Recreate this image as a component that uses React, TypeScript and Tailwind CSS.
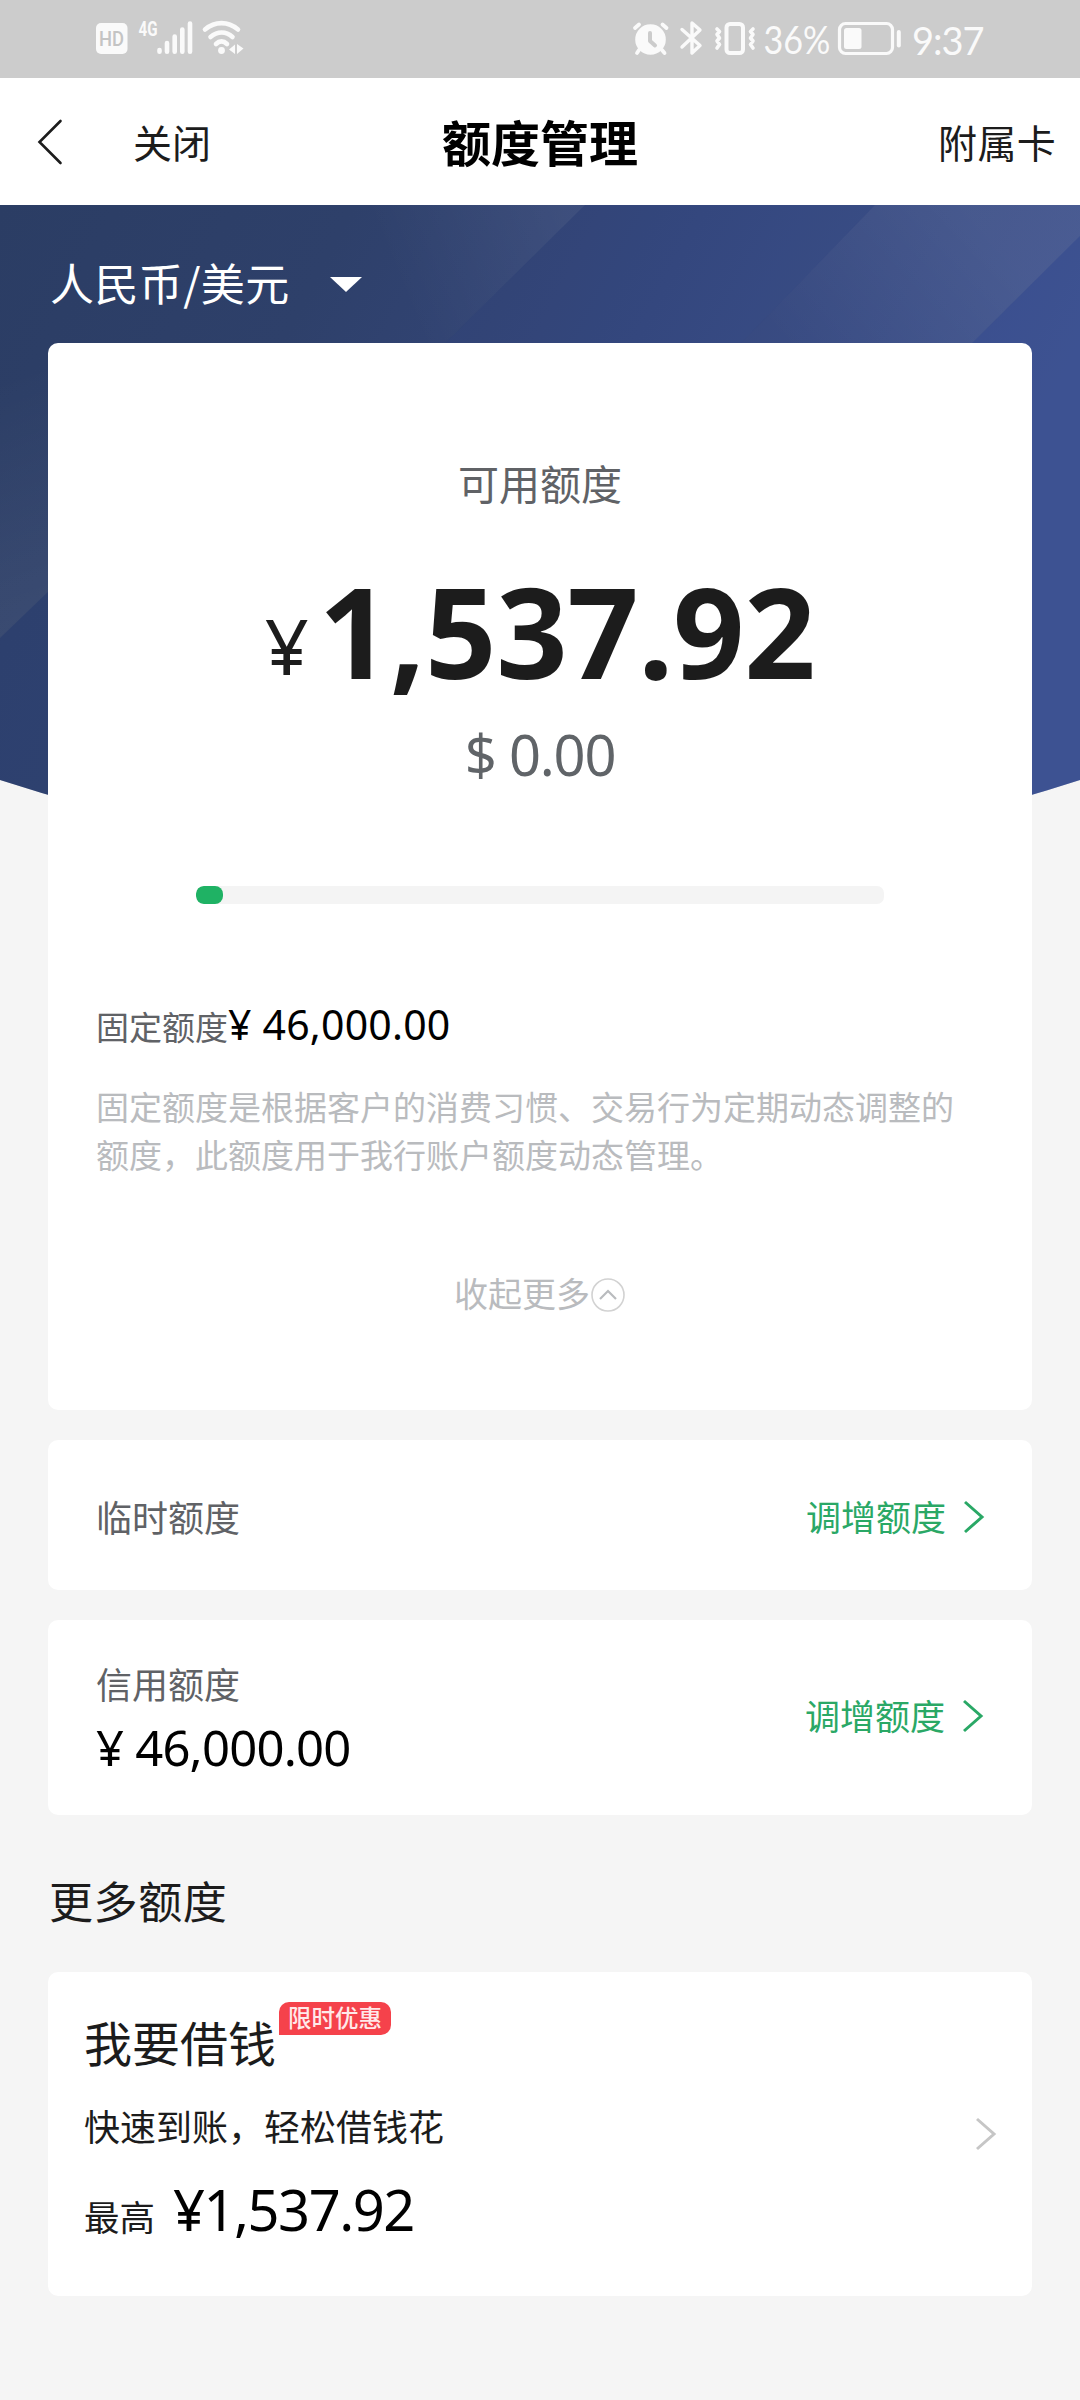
import React from "react";

const cjk = "font-['Noto_Sans_CJK_SC',sans-serif]";
const num = "font-['Noto_Sans','Noto_Sans_CJK_SC',sans-serif]";

function StatusBar() {
  return (
    <div className="flex h-[78px] w-full items-center bg-[#cccccc] text-[#fafafa]">
      <svg width="160" height="50" viewBox="90 15 160 50" className="ml-[90px]" fill="none" stroke="currentColor" strokeLinecap="round">
        <rect x="96" y="24" width="31.5" height="31" rx="5" fill="currentColor" stroke="none" />
        <text x="99" y="47" fontSize="21" fontFamily="Roboto" fontWeight="500" textLength="25" lengthAdjust="spacingAndGlyphs" fill="#c4c4c4" stroke="none">HD</text>
        <text x="138.500" y="37" fontSize="20" fontFamily="Roboto" fontWeight="700" textLength="19" lengthAdjust="spacingAndGlyphs" fill="currentColor" stroke="none">4G</text>
        <g strokeWidth="4.6">
          <path d="M159.5 51v1.7M167 44v8.7M174.7 37.500v15.200M182.300 30.500v22.200M190 24.500v28.200" />
        </g>
        <path d="M205 30.500C215 22 228 22 238 30.500" strokeWidth="4.600" />
        <path d="M210.500 38C217.500 32 226 32 232.500 38" strokeWidth="4.600" />
        <path d="M216 45C219.500 41.500 223.500 41.500 227 45" strokeWidth="4.600" />
        <circle cx="221.500" cy="51.500" r="3.400" fill="currentColor" stroke="none" />
        <path d="M229 50.500l6-5v9.500zM237 45l6.500 4.500-6.500 5.500z" fill="currentColor" stroke="none" />
      </svg>
      <svg width="278" height="50" viewBox="625 15 278 50" className="ml-[375px]" fill="none" stroke="currentColor" strokeLinecap="round" strokeLinejoin="round">
        <circle cx="650.500" cy="40.500" r="15.300" fill="currentColor" stroke="none" />
        <path d="M635 29l4-3.500M666.500 29l-4-3.500M639 51l-2 3M662 51l2.500 3" strokeWidth="3.800" />
        <path d="M650 34v8l5 4.500" stroke="#cccccc" strokeWidth="4" />
        <path d="M682 30.500l18 16-8 7.500V24l8 7-18 17" strokeWidth="3.400" />
        <rect x="726.500" y="25" width="16.500" height="29" rx="3.500" strokeWidth="4" />
        <path d="M717 30l2.500 2.500-2.500 3 2.500 3.500-2.500 3 2.500 3.500-2.500 3.500M753 30l-2.500 2.500 2.500 3-2.500 3.500 2.500 3-2.500 3.500 2.500 3.500" strokeWidth="3.600" />
        <text x="763.500" y="54.500" fontSize="38" fontFamily="Lato" textLength="67" lengthAdjust="spacingAndGlyphs" fill="currentColor" stroke="none">36%</text>
        <rect x="839.500" y="24.500" width="53" height="30" rx="6" strokeWidth="3.200" />
        <rect x="844" y="29" width="17.500" height="21" rx="2.500" fill="currentColor" stroke="none" />
        <path d="M898.800 33v13.500" strokeWidth="4" />
      </svg>
      <span className="ml-[9px] mt-px font-[Lato] text-[38px] leading-[50px] tracking-[-1px]">9:37</span>
    </div>
  );
}

function NavBar() {
  return (
    <div className={`${cjk} grid h-[127px] grid-cols-3 items-center bg-white text-[39px] leading-[48px] text-[#1c1c1c]`}>
      <div className="flex items-center">
        <svg width="28" height="48" viewBox="0 0 28 48" className="ml-9" fill="none" stroke="currentColor" strokeWidth="2.600" strokeLinecap="round">
          <path d="M24.500 3L3.500 24l21 21" />
        </svg>
        <span className="-mt-0.5 ml-[69px]">关闭</span>
      </div>
      <div className="-mt-0.5 text-center text-[49px] font-bold text-black">额度管理</div>
      <div className="-mt-0.5 pr-[24px] text-right tracking-[0.3px]">附属卡</div>
    </div>
  );
}

function BlueBackdrop() {
  return (
    <svg width="1080" height="620" viewBox="0 0 1080 620" className="absolute left-0 top-0">
      <defs>
        <linearGradient id="base" x1="0" y1="0" x2="1" y2="0.3">
          <stop offset="0" stopColor="#2b3d64" />
          <stop offset="0.3" stopColor="#2e406a" />
          <stop offset="0.6" stopColor="#35477c" />
          <stop offset="1" stopColor="#40548f" />
        </linearGradient>
        <linearGradient id="rayLeft" gradientUnits="userSpaceOnUse" x1="-90" y1="100" x2="24" y2="410">
          <stop offset="0.3" stopColor="#fff" stopOpacity="0" />
          <stop offset="1" stopColor="#fff" stopOpacity="0.06" />
        </linearGradient>
        <linearGradient id="rayMid" gradientUnits="userSpaceOnUse" x1="400" y1="90" x2="570" y2="20">
          <stop offset="0" stopColor="#fff" stopOpacity="0" />
          <stop offset="1" stopColor="#fff" stopOpacity="0.055" />
        </linearGradient>
        <linearGradient id="rayRight" gradientUnits="userSpaceOnUse" x1="790" y1="150" x2="960" y2="0">
          <stop offset="0" stopColor="#fff" stopOpacity="0" />
          <stop offset="1" stopColor="#fff" stopOpacity="0.06" />
        </linearGradient>
        <clipPath id="dome">
          <path d="M0 0H1080V575Q540 750 0 575Z" />
        </clipPath>
      </defs>
      <g clipPath="url(#dome)">
        <rect width="1080" height="620" fill="url(#base)" />
        <path d="M0 433L80 356V620H0Z" fill="#33488a" fillOpacity="0.18" />
        <path d="M0 60H80V356L0 433Z" fill="url(#rayLeft)" />
        <path d="M340 0H585L423 160H340Z" fill="url(#rayMid)" />
        <path d="M585 0H875L720 160H423Z" fill="#36509a" fillOpacity="0.08" />
        <path d="M875 0H1080V31L950 160H720Z" fill="url(#rayRight)" />
        <path d="M1080 31V620H950V160Z" fill="#37509a" fillOpacity="0.3" />
      </g>
    </svg>
  );
}

function Chevron({ className }: { className: string }) {
  return (
    <svg width="24" height="36" viewBox="0 0 24 36" fill="none" stroke="currentColor" className={className}>
      <path d="M3 3l17 15L3 33" />
    </svg>
  );
}

function RaiseLink({ className }: { className: string }) {
  return (
    <div className={`flex items-center text-[35px] text-[#2aa866] ${className}`}>
      <span className="leading-[48px]">调增额度</span>
      <Chevron className="ml-[16px] mt-[2px] stroke-3" />
    </div>
  );
}

export default function App() {
  return (
    <div className={`${cjk} flex h-[2400px] w-[1080px] flex-col overflow-hidden bg-[#f5f5f5]`}>
      <StatusBar />
      <NavBar />
      <div className="relative">
        <BlueBackdrop />
        <div className="relative flex flex-col px-12">
          <div className="flex h-[138px] items-center text-white">
            <span className="ml-[2px] mt-[16px] text-[44px] leading-[64px] tracking-[0.4px]">人民币/美元</span>
            <svg width="34" height="17" viewBox="0 0 34 17" className="ml-[39px] mt-[20px]">
              <path d="M1 1h32L17 16z" fill="#fff" />
            </svg>
          </div>

          <section className="flex h-[1067px] flex-col rounded-[10px] bg-white px-12">
            <h2 className="mt-[109px] text-center text-[41px] leading-[60px] text-[#606266]">可用额度</h2>
            <div className={`${num} mt-[59px] flex h-[120px] items-baseline justify-center leading-[120px] text-[#1c1c1c]`}>
              <span className="relative -top-1 text-[77px]">¥</span>
              <span className="ml-[10px] text-[125px] font-bold tracking-[-0.4px]">1,537.92</span>
            </div>
            <div className={`${num} mt-[30px] text-center text-[56px] leading-[66px] tracking-[-1.200px] text-[#606468]`}>$ 0.00</div>
            <div className="mx-[100px] mt-[99px] h-[18px] overflow-hidden rounded-[7px] bg-[#f4f4f4]">
              <div className="h-full w-[27px] rounded-[8px] bg-[#1fb264]" />
            </div>
            <div className="mt-[90px] flex items-baseline leading-[60px]">
              <span className="text-[33px] text-[#606266]">固定额度</span>
              <span className={`${num} text-[41px] tracking-[0.2px] text-black`}>¥ 46,000.00</span>
            </div>
            <p className="mt-[26px] text-[33px] leading-[48px] text-[#b9bbbe]">
              固定额度是根据客户的消费习惯、交易行为定期动态调整的额度，此额度用于我行账户额度动态管理。
            </p>
            <div className="mt-[91px] flex items-center justify-center text-[34px] leading-[48px] text-[#b9bbbe]">
              <span>收起更多</span>
              <svg width="36" height="36" viewBox="0 0 36 36" fill="none" stroke="currentColor" className="mt-[3px]">
                <circle cx="18" cy="18" r="16" strokeWidth="1.600" stroke="#d2d2d2" />
                <path d="M10 22l8-8 8 8" strokeWidth="2.200" />
              </svg>
            </div>
          </section>

          <section className="mt-[30px] flex h-[150px] items-center justify-between rounded-[10px] bg-white px-12">
            <span className="mt-px text-[36px] leading-[48px] text-[#606266]">临时额度</span>
            <RaiseLink className="-mr-0.5 mt-[2px]" />
          </section>

          <section className="mt-[30px] flex h-[195px] items-center justify-between rounded-[10px] bg-white px-12">
            <div className="flex flex-col">
              <span className="text-[36px] leading-[54px] text-[#606266]">信用额度</span>
              <span className={`${num} mt-[4px] text-[49px] leading-[66px] tracking-[-0.8px] text-black`}>¥ 46,000.00</span>
            </div>
            <RaiseLink className="-mr-px -mt-[6px]" />
          </section>

          <h3 className="ml-px mt-[52px] h-[105px] text-[44px] leading-[66px] tracking-[0.6px] text-[#1c1c1c]">更多额度</h3>

          <section className="flex h-[324px] items-center justify-between rounded-[10px] bg-white pl-9 pr-[34px]">
            <div className="flex h-full flex-col text-[#1c1c1c]">
              <div className="mt-[30px] flex h-[76px]">
                <span className="mt-[7px] text-[48px] leading-[64px]">我要借钱</span>
                <span className="ml-[3px] flex h-[33px] w-[112px] items-center justify-center rounded-[10px] rounded-bl-none bg-[#f5424b] text-[23.500px] font-medium leading-[33px] text-[#ffe9e9]"><span className="-mt-[2px]">限时优惠</span></span>
              </div>
              <span className="mt-[23px] text-[36px] leading-[48px]">快速到账，轻松借钱花</span>
              <div className="mt-[22px] flex items-baseline leading-[76px]">
                <span className="text-[35.500px]">最高</span>
                <span className={`${num} ml-[18px] text-[56px] tracking-[-1.500px] text-black`}>¥1,537.92</span>
              </div>
            </div>
            <Chevron className="stroke-3 text-[#c6c6c6]" />
          </section>
        </div>
      </div>
    </div>
  );
}
